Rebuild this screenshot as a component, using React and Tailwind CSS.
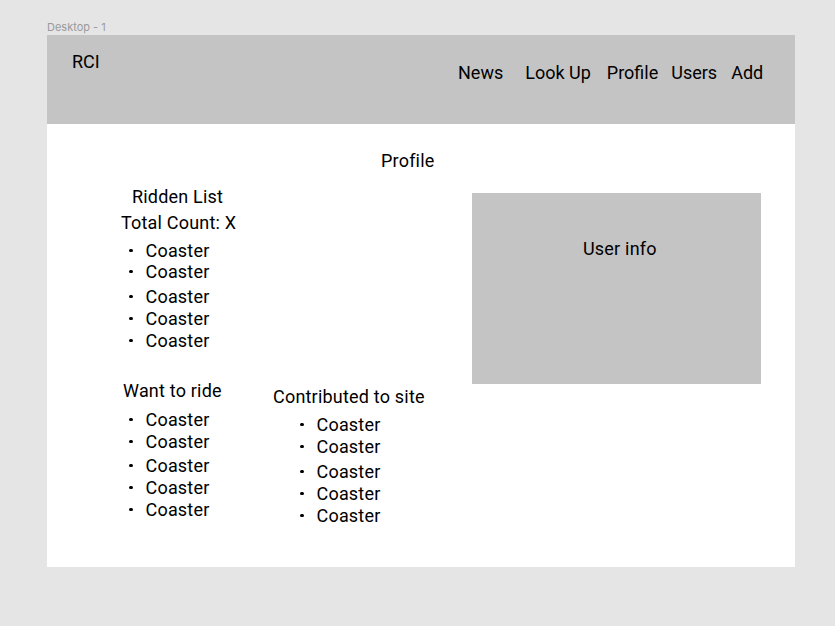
import React from "react";

function Item({ className = "" }) {
  return (
    <div className={"flex items-center h-[21px] " + className}>
      <span className="w-[3.5px] h-[3.5px] rounded-full bg-black mr-[13px] shrink-0" />
      <span>Coaster</span>
    </div>
  );
}

function CoasterList({ gaps, className = "" }) {
  return (
    <div className={"flex flex-col " + className}>
      {gaps.map((g, i) => (
        <Item key={i} className={g} />
      ))}
    </div>
  );
}

export default function App() {
  return (
    <div className="w-[835px] h-[626px] bg-[#e5e5e5] pt-[20px] pl-[47px] font-['Roboto',sans-serif] text-black">
      <div className="text-[11px] leading-[15px] text-[#9a9a9a] font-['Inter',sans-serif]">Desktop - 1</div>
      <div className="w-[748px] h-[532px] bg-white text-[18px] leading-[21px]">
        <div className="h-[89px] bg-[#c4c4c4] flex items-start">
          <div className="w-[411px] pl-[25px] pt-[16px]">RCI</div>
          <div className="flex pt-[27px]">
            <span>News</span>
            <span className="ml-[22px]">Look Up</span>
            <span className="ml-[16px]">Profile</span>
            <span className="ml-[13px]">Users</span>
            <span className="ml-[14px]">Add</span>
          </div>
        </div>
        <div className="tracking-[0.2px]">
          <div className="pt-[26px] pl-[334px]">Profile</div>
          <div className="flex mt-[15px]">
            <div className="w-[425px] flex flex-col">
              <div className="ml-[85px]">Ridden List</div>
              <div className="ml-[74px] mt-[5px]">Total Count: X</div>
              <CoasterList
                className="ml-[82px] mt-[7px]"
                gaps={["", "", "mt-[4px]", "mt-[1px]", "mt-[1px]"]}
              />
              <div className="flex mt-[29px] items-start">
                <div className="ml-[76px] w-[150px] flex flex-col">
                  <div>Want to ride</div>
                  <CoasterList
                    className="ml-[6px] mt-[8px]"
                    gaps={["", "mt-[1px]", "mt-[3px]", "mt-[1px]", "mt-[1px]"]}
                  />
                </div>
                <div className="mt-[6px] flex flex-col">
                  <div>Contributed to site</div>
                  <CoasterList
                    className="ml-[27px] mt-[7px]"
                    gaps={["", "mt-[1px]", "mt-[4px]", "mt-[1px]", "mt-[1px]"]}
                  />
                </div>
              </div>
            </div>
            <div className="mt-[7px] w-[289px] h-[191px] bg-[#c4c4c4] pl-[111px] pt-[45px]">
              User info
            </div>
          </div>
        </div>
      </div>
    </div>
  );
}
